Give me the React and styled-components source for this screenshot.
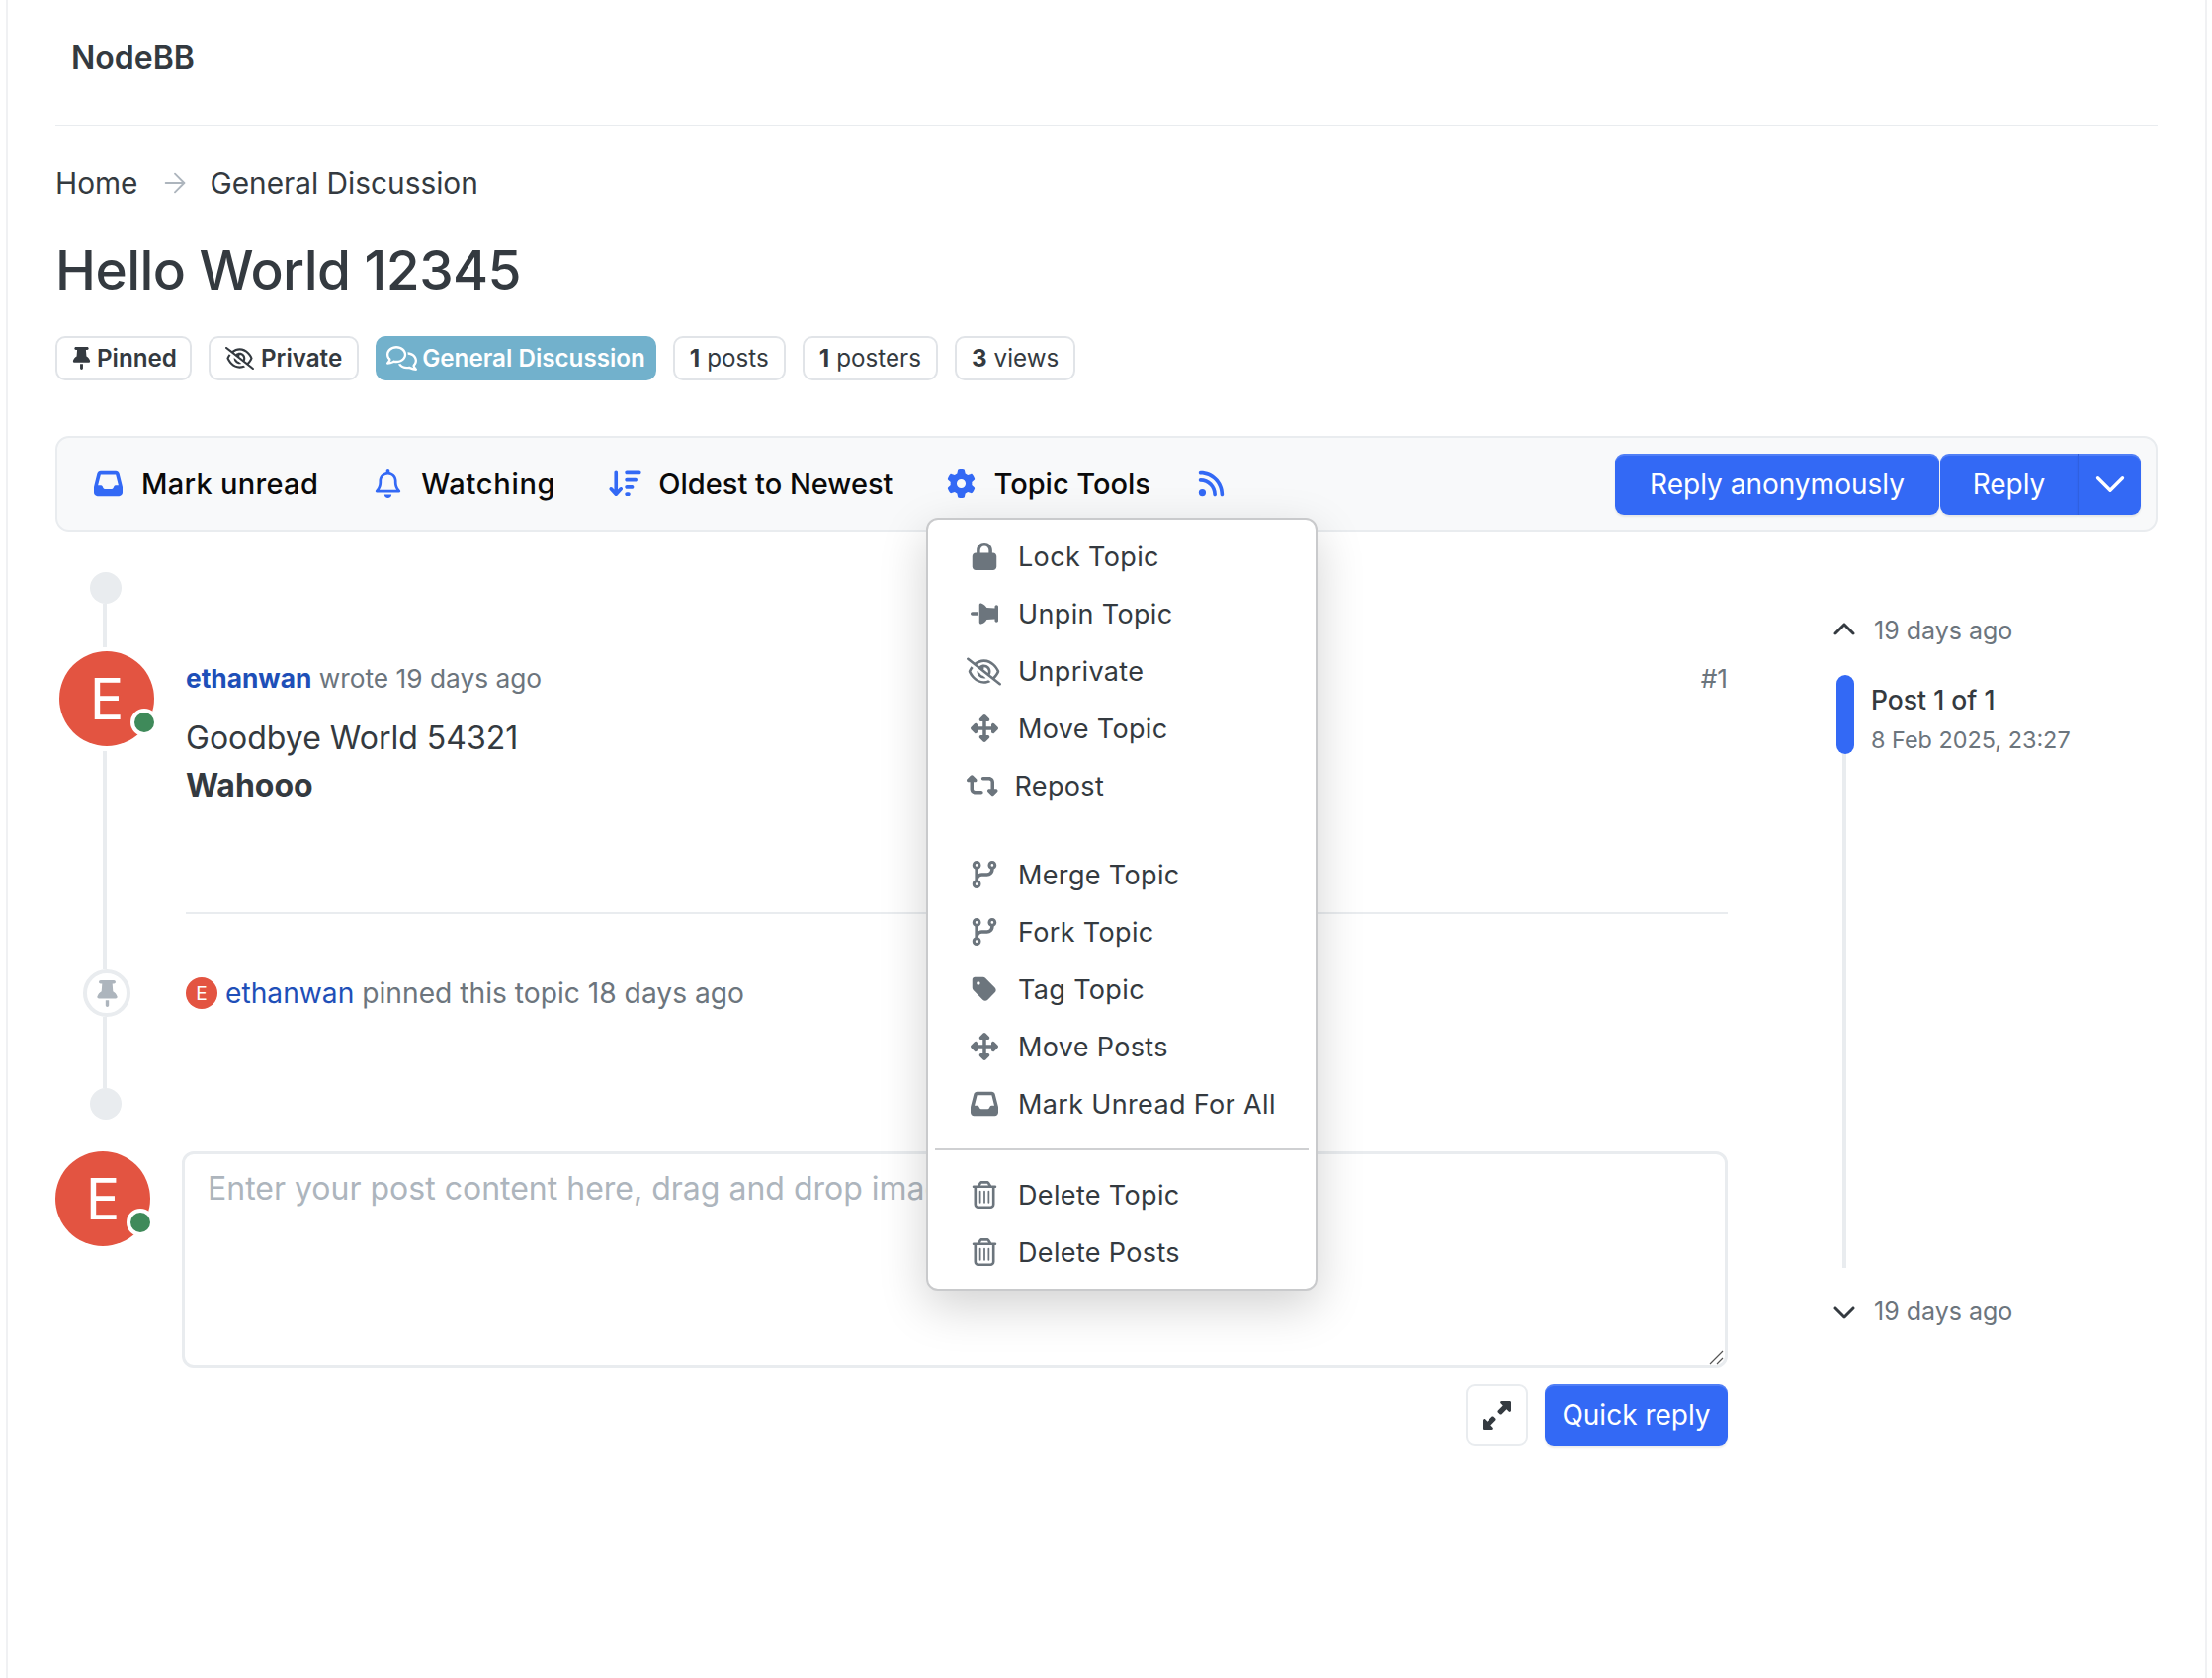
import React from "react";
import styled, { createGlobalStyle } from "styled-components";
import {
  FaInbox, FaRegBell, FaArrowDownWideShort, FaGear, FaRss, FaLock, FaThumbtack, FaRegEyeSlash,
  FaUpDownLeftRight, FaRetweet, FaCodeBranch, FaTag, FaRegTrashCan, FaRegComments,
  FaUpRightAndDownLeftFromCenter, FaChevronUp, FaChevronDown,
} from "react-icons/fa6";
import { ArrowRight, ChevronDown } from "lucide-react";

const GlobalStyle = createGlobalStyle`
  html, body { margin: 0; padding: 0; background: #fff; }
  body { font-family: Inter, "Liberation Sans", sans-serif; color: #343a40; }
  * { box-sizing: border-box; }
`;

const Shell = styled.div`
  width: 2227px;
  min-height: 1698px;
  margin-left: 6px;
  padding: 0 48px;
  border-left: 2px solid #f0f1f3;
  border-right: 2px solid #f0f1f3;
`;

const Brand = styled.div`
  height: 128px;
  padding: 39px 0 0 16px;
  border-bottom: 2px solid #e9ecef;
  font-size: 32px;
  line-height: 40px;
  font-weight: 600;
`;

const Crumbs = styled.nav`
  display: flex;
  align-items: center;
  height: 40px;
  margin-top: 37px;
  font-size: 29.8px;
  color: #343a40;
  svg { color: #adb5bd; margin: 0 19px 0 22px; }
`;

const Title = styled.h1`
  margin: 36px 0 0;
  font-size: 55px;
  line-height: 64px;
  font-weight: 500;
  letter-spacing: -0.55px;
`;

const Badges = styled.div`
  display: flex;
  gap: 17px;
  margin-top: 35px;
`;

const Badge = styled.div`
  display: flex;
  align-items: center;
  gap: ${(p) => p.$gap || 4}px;
  height: 45px;
  padding: 0 ${(p) => p.$pad || 15}px;
  border: 2px solid ${(p) => (p.$teal ? "#72b1cc" : "#e1e4e8")};
  border-radius: 10px;
  background: ${(p) => (p.$teal ? "#72b1cc" : "#fff")};
  color: ${(p) => (p.$teal ? "#fff" : "#343a40")};
  font-size: 24.2px;
  font-weight: ${(p) => (p.$light ? 400 : 600)};
  b { font-weight: 700; }
  svg { font-size: ${(p) => p.$icon || 23}px; }
`;

const Toolbar = styled.div`
  position: relative;
  display: flex;
  align-items: center;
  justify-content: space-between;
  height: 97px;
  margin-top: 56px;
  padding: 0 15px 0 37px;
  background: #f8f9fa;
  border: 2px solid #e9ecef;
  border-radius: 14px;
`;

const ToolGroup = styled.div`
  display: flex;
  align-items: center;
`;

const Tool = styled.div`
  display: flex;
  align-items: center;
  gap: ${(p) => p.$gap || 19}px;
  margin-left: ${(p) => p.$left || 0}px;
  color: #0a0a0a;
  font-size: 29px;
  font-weight: 500;
  letter-spacing: ${(p) => p.$track || 0}px;
  svg { color: #3369f5; font-size: ${(p) => p.$icon || 29}px; }
`;

const ReplyGroup = styled.div`
  display: flex;
  gap: 1px;
`;

const SplitGroup = styled.div`
  display: flex;
`;

const BlueButton = styled.div`
  display: flex;
  align-items: center;
  justify-content: center;
  width: ${(p) => p.$w}px;
  height: 62px;
  background: #3369f5;
  color: #fff;
  font-size: 28px;
  border-radius: 9px;
  box-shadow: inset 0 2px 0 rgba(255, 255, 255, 0.15), 0 2px 2px rgba(0, 0, 0, 0.08);
`;

const SplitPart = styled(BlueButton)`
  border-radius: ${(p) => (p.$end ? "0 9px 9px 0" : "9px 0 0 9px")};
  border-left: ${(p) => (p.$end ? "1px solid #2f60e0" : "none")};
`;

const Menu = styled.div`
  position: absolute;
  left: 879px;
  top: 81px;
  z-index: 5;
  width: 396px;
  height: 782px;
  padding: 8px 7px 0;
  background: #fff;
  border: 2px solid #c9cacc;
  border-radius: 12px;
  box-shadow: 0 16px 48px rgba(0, 0, 0, 0.18);
`;

const MenuRow = styled.div`
  display: flex;
  align-items: center;
  gap: 17px;
  height: 58px;
  padding-left: 32px;
  margin-top: ${(p) => p.$gapTop || 0}px;
  font-size: 27px;
  letter-spacing: 0.35px;
  color: #343a40;
`;

const MenuIcon = styled.span`
  display: inline-flex;
  justify-content: center;
  width: ${(p) => (p.$auto ? "auto" : "35px")};
  color: #6c757d;
  font-size: ${(p) => p.$size || 28}px;
  svg { display: block; transform: ${(p) => (p.$rotate ? "rotate(90deg)" : "none")}; }
`;

const MenuRule = styled.hr`
  height: 2px;
  margin: 16px 0;
  border: 0;
  background: #cfd0d2;
`;

const Columns = styled.div`
  display: flex;
  gap: 110px;
`;

const Thread = styled.div`
  width: 1692px;
`;

const Row = styled.div`
  display: flex;
  gap: 28px;
  margin-top: ${(p) => p.$top || 0}px;
`;

const Rail = styled.div`
  display: flex;
  flex-direction: column;
  align-items: center;
  flex: 0 0 104px;
`;

const RailDot = styled.div`
  flex: none;
  width: 32px;
  height: 32px;
  margin-right: 2px;
  border-radius: 50%;
  background: #e9ecef;
`;

const RailLine = styled.div`
  width: 4px;
  height: ${(p) => (p.$h ? `${p.$h}px` : "auto")};
  flex: ${(p) => (p.$h ? "none" : 1)};
  margin-right: 4px;
  background: #e9ecef;
`;

const Avatar = styled.div`
  position: relative;
  flex: none;
  width: ${(p) => p.$size}px;
  height: ${(p) => p.$size}px;
  margin: ${(p) => p.$margin || 0};
  display: flex;
  align-items: center;
  justify-content: center;
  border-radius: 50%;
  background: #e35441;
  color: #fff;
  font-size: ${(p) => p.$size * 0.6}px;
`;

const Online = styled.span`
  position: absolute;
  right: -4px;
  bottom: 10px;
  width: 28px;
  height: 28px;
  border-radius: 50%;
  background: #3f8a5a;
  border: 4px solid #fff;
`;

const PinRing = styled.div`
  flex: none;
  width: 48px;
  height: 48px;
  display: flex;
  align-items: center;
  justify-content: center;
  border: 4px solid #e9ecef;
  border-radius: 50%;
  color: #adb5bd;
  font-size: 27px;
`;

const PostBody = styled.div`
  flex: 1;
  padding-top: 90px;
`;

const PostHead = styled.div`
  display: flex;
  justify-content: space-between;
  height: 36px;
  line-height: 36px;
  font-size: 26.3px;
  color: #6c757d;
`;

const UserLink = styled.span`
  color: #1e4fb8;
  font-weight: ${(p) => (p.$bold ? 700 : 400)};
`;

const PostText = styled.div`
  margin: 18px 0 104px;
  font-size: 32px;
  line-height: 48px;
  b { display: block; font-weight: 700; }
`;

const Divider = styled.div`
  height: 2px;
  margin-bottom: 56px;
  background: #e9ecef;
`;

const EventLine = styled.div`
  flex: 1;
  display: flex;
  align-items: center;
  gap: 8px;
  height: 48px;
  font-size: 28.2px;
  color: #6c757d;
`;

const Composer = styled.div`
  display: flex;
  gap: 32px;
  margin-top: 32px;
`;

const ComposerBody = styled.div`
  flex: 1;
`;

const InputWrap = styled.div`
  position: relative;
`;

const PostInput = styled.textarea`
  display: block;
  width: 100%;
  height: 219px;
  padding: 11px 23px;
  border: 3px solid #e9ecef;
  border-radius: 12px;
  outline: none;
  resize: none;
  font-family: Inter, "Liberation Sans", sans-serif;
  font-size: 32px;
  line-height: 48px;
  &::placeholder { color: #adb5bd; opacity: 1; }
`;

const ResizeGrip = styled.svg`
  position: absolute;
  right: 4px;
  bottom: 3px;
  width: 15px;
  height: 15px;
`;

const ComposerActions = styled.div`
  display: flex;
  justify-content: flex-end;
  gap: 17px;
  margin-top: 17px;
`;

const GhostButton = styled.div`
  display: flex;
  align-items: center;
  justify-content: center;
  width: 63px;
  height: 62px;
  border: 2px solid #e9ecef;
  border-radius: 9px;
  color: #343a40;
  font-size: 29px;
`;

const Scrubber = styled.aside`
  width: 325px;
  padding-top: 82px;
`;

const ScrubEnd = styled.div`
  display: flex;
  align-items: center;
  gap: 18px;
  height: 36px;
  margin: ${(p) => p.$top || 0}px 0 0 -4px;
  font-size: 25px;
  color: #6c757d;
  svg { color: #343a40; font-size: 24px; }
`;

const ScrubHandle = styled.div`
  display: flex;
  gap: 17px;
  height: 80px;
  margin-top: 27px;
`;

const ScrubBar = styled.div`
  width: 18px;
  height: 80px;
  border-radius: 9px;
  background: #3369f5;
`;

const ScrubTitle = styled.div`
  margin-top: 5px;
  font-size: 26.5px;
  line-height: 40px;
  font-weight: 500;
`;

const ScrubDate = styled.div`
  margin-top: 3px;
  font-size: 23.4px;
  line-height: 36px;
  color: #6c757d;
`;

const ScrubLine = styled.div`
  width: 4px;
  height: 520px;
  margin-left: 6px;
  background: #e9ecef;
`;

const menuTop = [
  [<FaLock />, "Lock Topic"],
  [<FaThumbtack />, "Unpin Topic", { $rotate: true }],
  [<FaRegEyeSlash />, "Unprivate", { $size: 35 }],
  [<FaUpDownLeftRight />, "Move Topic"],
];

const menuMiddle = [
  [<FaCodeBranch />, "Fork Topic"],
  [<FaTag />, "Tag Topic"],
  [<FaUpDownLeftRight />, "Move Posts"],
  [<FaInbox />, "Mark Unread For All"],
];

const menuBottom = [
  [<FaRegTrashCan />, "Delete Topic"],
  [<FaRegTrashCan />, "Delete Posts"],
];

const renderItems = (items) =>
  items.map(([icon, label, iconProps]) => (
    <MenuRow key={label}>
      <MenuIcon {...iconProps}>{icon}</MenuIcon>
      {label}
    </MenuRow>
  ));

export default function App() {
  return (
    <Shell>
      <GlobalStyle />
      <Brand>NodeBB</Brand>
      <Crumbs>
        Home
        <ArrowRight size={32} strokeWidth={1.4} />
        General Discussion
      </Crumbs>
      <Title>Hello World 12345</Title>
      <Badges>
        <Badge $pad={13}><FaThumbtack />Pinned</Badge>
        <Badge $gap={7} $icon={29}><FaRegEyeSlash />Private</Badge>
        <Badge $teal $pad={9} $gap={5} $icon={31}><FaRegComments />General Discussion</Badge>
        <Badge $light $gap={7}><b>1</b>posts</Badge>
        <Badge $light $gap={7}><b>1</b>posters</Badge>
        <Badge $light $gap={7}><b>3</b>views</Badge>
      </Badges>

      <Toolbar>
        <ToolGroup>
          <Tool $track={0.3}><FaInbox />Mark unread</Tool>
          <Tool $left={56} $track={0.7}><FaRegBell />Watching</Tool>
          <Tool $left={54} $gap={17.5} $icon={32.6}><FaArrowDownWideShort />Oldest to Newest</Tool>
          <Tool $left={55} $gap={18}><FaGear />Topic Tools</Tool>
          <Tool $left={47}><FaRss /></Tool>
        </ToolGroup>
        <ReplyGroup>
          <BlueButton $w={328}>Reply anonymously</BlueButton>
          <SplitGroup>
            <SplitPart $w={139}>Reply</SplitPart>
            <SplitPart $w={64} $end><ChevronDown size={50} strokeWidth={1.6} /></SplitPart>
          </SplitGroup>
        </ReplyGroup>
        <Menu>
          {renderItems(menuTop)}
          <MenuRow>
            <MenuIcon $auto $size={31.5}><FaRetweet /></MenuIcon>
            Repost
          </MenuRow>
          <MenuRow $gapTop={32}>
            <MenuIcon><FaCodeBranch /></MenuIcon>
            Merge Topic
          </MenuRow>
          {renderItems(menuMiddle)}
          <MenuRule />
          {renderItems(menuBottom)}
        </Menu>
      </Toolbar>

      <Columns>
        <Thread>
          <Row $top={41}>
            <Rail>
              <RailDot />
              <RailLine $h={44} />
              <Avatar $size={96} $margin="4px 0 5px">E<Online /></Avatar>
              <RailLine />
            </Rail>
            <PostBody>
              <PostHead>
                <span><UserLink $bold>ethanwan</UserLink> wrote 19 days ago</span>
                <span>#1</span>
              </PostHead>
              <PostText>
                Goodbye World 54321
                <b>Wahooo</b>
              </PostText>
              <Divider />
            </PostBody>
          </Row>
          <Row>
            <Rail>
              <PinRing><FaThumbtack /></PinRing>
              <RailLine $h={72} />
              <RailDot />
            </Rail>
            <EventLine>
              <Avatar $size={32}>E</Avatar>
              <span><UserLink>ethanwan</UserLink> pinned this topic 18 days ago</span>
            </EventLine>
          </Row>
          <Composer>
            <Avatar $size={96}>E<Online /></Avatar>
            <ComposerBody>
              <InputWrap>
                <PostInput placeholder="Enter your post content here, drag and drop images" />
                <ResizeGrip viewBox="0 0 15 15">
                  <path d="M1 14 14 1M8 14l6-6" stroke="#555" strokeWidth="1.2" fill="none" />
                </ResizeGrip>
              </InputWrap>
              <ComposerActions>
                <GhostButton><FaUpRightAndDownLeftFromCenter /></GhostButton>
                <BlueButton $w={185}>Quick reply</BlueButton>
              </ComposerActions>
            </ComposerBody>
          </Composer>
        </Thread>
        <Scrubber>
          <ScrubEnd><FaChevronUp />19 days ago</ScrubEnd>
          <ScrubHandle>
            <ScrubBar />
            <div>
              <ScrubTitle>Post 1 of 1</ScrubTitle>
              <ScrubDate>8 Feb 2025, 23:27</ScrubDate>
            </div>
          </ScrubHandle>
          <ScrubLine />
          <ScrubEnd $top={26}><FaChevronDown />19 days ago</ScrubEnd>
        </Scrubber>
      </Columns>
    </Shell>
  );
}
